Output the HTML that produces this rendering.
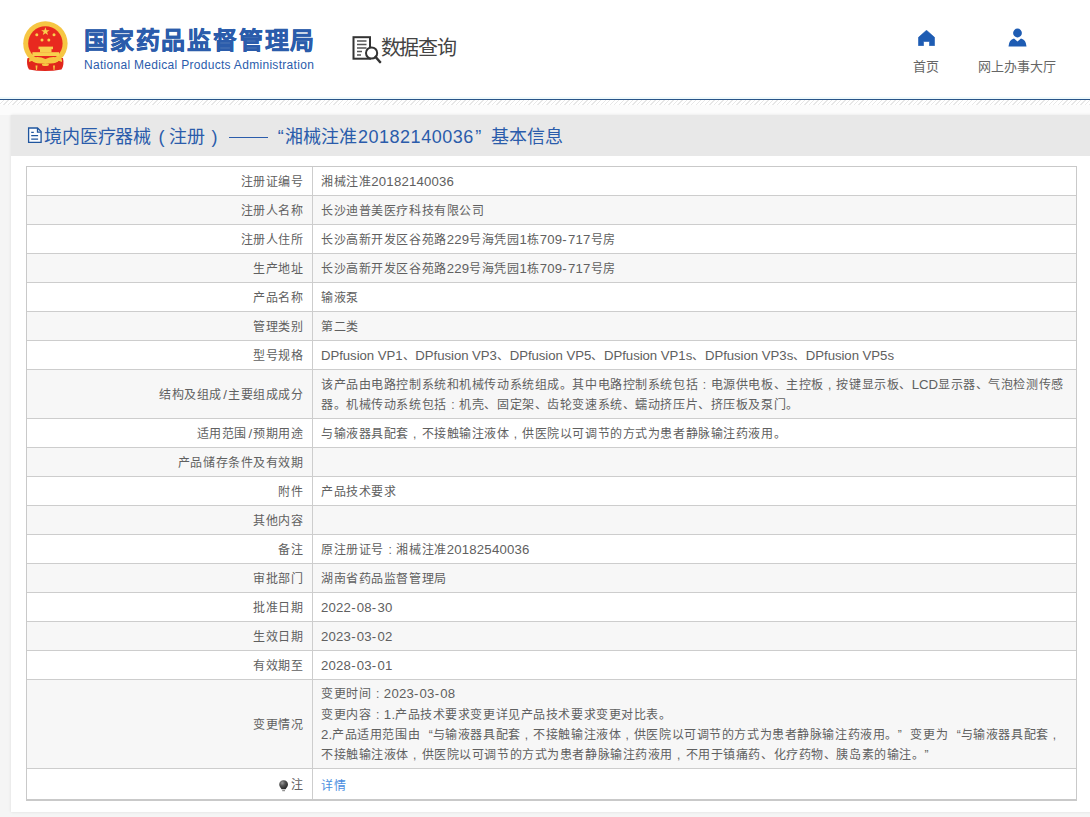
<!DOCTYPE html>
<html lang="zh-CN">
<head>
<meta charset="utf-8">
<style>
*{margin:0;padding:0;box-sizing:border-box;}
html,body{width:1090px;height:817px;overflow:hidden;}
body{font-family:"Liberation Sans",sans-serif;background:#f5f5f5;position:relative;color:#333;}
.hdr{position:absolute;left:0;top:0;width:1090px;height:99px;background:#fff;}
.bline{position:absolute;left:0;top:99px;width:1090px;height:1px;background:#2a5588;}
.cyan{position:absolute;left:0;top:97px;width:1090px;height:2px;background:#eef9fc;}
.hatch{position:absolute;left:0;top:100px;width:1090px;height:5px;
 background:repeating-linear-gradient(135deg,#fff 0px,#fff 2.2px,#e7e7e7 2.2px,#e7e7e7 3.2px);}
.fade{position:absolute;left:0;top:105px;width:1090px;height:10px;background:#fcfcfc;}
.emb{position:absolute;left:18px;top:18px;}
.t1{position:absolute;left:84px;top:21.2px;font-size:24px;letter-spacing:1.8px;font-weight:bold;color:#2b5cab;-webkit-text-stroke:0.45px #2b5cab;white-space:nowrap;}
.t2{position:absolute;left:84px;top:57.9px;font-size:12px;letter-spacing:0.3px;color:#2b5cab;white-space:nowrap;}
.sq{position:absolute;left:352px;top:36px;}
.sqt{position:absolute;left:380.5px;top:32.2px;font-size:20px;letter-spacing:-1.2px;color:#444;white-space:nowrap;}
.nav{position:absolute;top:28px;text-align:center;font-size:13px;color:#666;white-space:nowrap;}
.panel{position:absolute;left:11px;top:115px;width:1100px;height:697px;background:#fff;box-shadow:0 0 3px rgba(0,0,0,0.10);}
.ptitle{position:absolute;left:0;top:0;width:1100px;height:41px;background:#e8e8e8;}
.ptitle .tt{position:absolute;left:33.2px;top:6.7px;font-size:18px;letter-spacing:-0.2px;color:#2b5cab;white-space:nowrap;}
.tt .pl,.tt .pr{display:inline-block;width:17.8px;text-align:center;letter-spacing:0;}
.tt .pl{padding-left:3px;}
.tt .pr{padding-left:2.5px;}
.tt .dash{display:inline-block;width:45.3px;height:10px;position:relative;}
.tt .dash:after{content:"";position:absolute;left:6.5px;width:39px;top:4.8px;height:1px;background:#2b5cab;}
.tt .q1{display:inline-block;width:17.8px;text-align:right;padding-right:1.5px;letter-spacing:0;}
.tt .q2{display:inline-block;width:17.6px;text-align:left;padding-left:1.4px;letter-spacing:0;}
.tt .tdg{letter-spacing:0.53px;margin-left:1.4px;}
.picon{position:absolute;left:16px;top:12px;}
.tbl{position:absolute;left:15px;top:51px;width:1051px;height:635px;border:1px solid #c9c9c9;border-bottom:2px solid #c9c9c9;}
.row{position:absolute;left:0;width:1049px;}
.hl{position:absolute;left:0;width:1049px;height:1px;background:#cdcdcd;}
.vl{position:absolute;left:285px;top:0;width:1px;height:100%;background:#cdcdcd;}
.lc{position:absolute;left:0;top:0;width:285px;height:100%;display:flex;align-items:center;justify-content:flex-end;padding-right:8.5px;font-size:12px;color:#606060;white-space:nowrap;}
.rc{position:absolute;left:286px;top:0;right:0;height:100%;display:flex;align-items:center;padding-left:8px;font-size:12px;line-height:20.2px;color:#606060;white-space:nowrap;}
.lc,.rc{letter-spacing:0.57px;line-height:20.2px;}
.lc>div,.rc>div{position:relative;top:1.4px;}
.la{letter-spacing:-0.05px;font-size:13.2px;}
.dg{letter-spacing:0.2px;}
.hy{letter-spacing:1.2px;}
.sl{margin:0 1.2px 0 1.4px;}
.cl,.cm{display:inline-block;width:12.57px;text-align:center;letter-spacing:0;}
.cm{position:relative;left:-0.5px;}
.ql,.qr{display:inline-block;width:12.57px;letter-spacing:0;}
.ql{text-align:right;}
.qr{text-align:left;}
a{color:#4a8de0;text-decoration:none;position:relative;top:1.5px;}
.pin{display:inline-block;width:10px;height:12px;margin-right:1.5px;vertical-align:-3px;position:relative;left:-0.5px;}
</style>

</head>
<body>
<svg width="0" height="0" style="position:absolute"><defs><radialGradient id="pg" cx="0.35" cy="0.3" r="0.7"><stop offset="0" stop-color="#9a9a9a"/><stop offset="0.45" stop-color="#555"/><stop offset="1" stop-color="#2a2a2a"/></radialGradient></defs></svg>
<div class="hdr">
  <svg class="emb" width="54" height="56" viewBox="0 0 54 56">
    <path d="M9.5 40 Q8 47 11 51.5 Q27 54.5 43.5 51.5 Q46.5 47 45 40 Z" fill="#e1261c"/>
    <circle cx="27.4" cy="25.4" r="22.2" fill="#f6c643"/>
    <circle cx="27.4" cy="25.4" r="17.2" fill="#e8291f"/>
    <path d="M9.5 41 Q18 47 27.4 45 Q37 47 45 41 L45 45 Q37 50 27.4 48 Q18 50 9.5 45 Z" fill="#e1261c"/>
    <rect x="20.5" y="28.6" width="14.5" height="2.6" fill="#f8d04e"/>
    <rect x="22" y="31" width="11.5" height="3.4" fill="#f8d04e"/>
    <rect x="14.4" y="34.2" width="26.7" height="3.8" fill="#f8d04e"/>
    <path d="M11 41.5 Q19 37 27.4 41 Q36 37 44 41.5 L44 44 Q36 40 27.4 44 Q19 40 11 44 Z" fill="#f6c643"/>
    <ellipse cx="27.4" cy="46.5" rx="3.5" ry="1.6" fill="#f6c643"/>
    <path d="M17.5 47.5 L19.5 47.5 L19 52 L18 52 Z M35 47.5 L37 47.5 L36.5 52 L35.5 52 Z" fill="#f6c643"/>
    <polygon points="27.4,9.2 28.5,12.2 31.6,12.2 29.1,14.1 30,17.1 27.4,15.3 24.8,17.1 25.7,14.1 23.2,12.2 26.3,12.2" fill="#f8d04e"/>
    <circle cx="18.8" cy="16.8" r="1.5" fill="#f8d04e"/><circle cx="36" cy="16.8" r="1.5" fill="#f8d04e"/>
    <circle cx="24" cy="21.9" r="1.5" fill="#f8d04e"/><circle cx="30.8" cy="21.9" r="1.5" fill="#f8d04e"/>
  </svg>
  <div class="t1">国家药品监督管理局</div>
  <div class="t2">National Medical Products Administration</div>
  <svg class="sq" width="30" height="28" viewBox="0 0 30 28">
    <rect x="1.5" y="1.2" width="16.5" height="21.5" fill="none" stroke="#333" stroke-width="2"/>
    <path d="M5 5 H14.5 M5 8.5 H14.5 M5 12 H14.5 M5 15.5 H10 M5 19 H9" stroke="#555" stroke-width="1.4"/>
    <circle cx="19.6" cy="17" r="5.6" fill="#fff" stroke="#333" stroke-width="2"/>
    <path d="M23.6 21 L28 26" stroke="#333" stroke-width="2.6" stroke-linecap="round"/>
  </svg>
  <div class="sqt">数据查询</div>
  <div class="nav" style="left:911px;width:30px;">
    <svg width="17" height="16" viewBox="0 0 17 16" style="display:block;margin:2px auto 0;">
      <path d="M8.5 0.3 L16.5 7.3 V15.7 H11.5 V11.5 H5.5 V15.7 H0.5 V7.3 Z" fill="#1e5cb3" stroke="#1e5cb3" stroke-width="0.6" stroke-linejoin="round"/>
    </svg>
    <div style="margin-top:10px;">首页</div>
  </div>
  <div class="nav" style="left:976px;width:82px;">
    <svg width="19" height="19" viewBox="0 0 19 19" style="display:block;margin:0 auto;">
      <circle cx="9.5" cy="5" r="4.4" fill="#1e5cb3"/>
      <path d="M0.5 18.5 Q1 11.5 6 10.5 L9.5 13.5 L13 10.5 Q18 11.5 18.5 18.5 Z" fill="#1e5cb3"/>
    </svg>
    <div style="margin-top:9px;">网上办事大厅</div>
  </div>
</div>
<div class="cyan"></div>
<div class="bline"></div>
<div class="hatch"></div>
<div class="fade"></div>
<div class="panel">
  <div class="ptitle">
    <svg class="picon" width="16" height="17" viewBox="0 0 16 17"><path d="M1.6 1 H10.5 L14.1 4.6 V15.4 H1.6 Z" fill="#fafcff" stroke="#1f559e" stroke-width="1.3" stroke-linejoin="miter"/><path d="M10.5 1 V5.2 H14.1 M4.2 5.4 H6.8 M4.2 8.6 H11.1 M4.2 12.2 H11.1" fill="none" stroke="#1f559e" stroke-width="1.3"/></svg>
    <div class="tt">境内医疗器械<span class="pl">(</span>注册<span class="pr">)</span><span class="dash"></span><span class="q1">&#8220;</span>湘械注准<span class="tdg">20182140036</span><span class="q2">&#8221;</span>基本信息</div>
  </div>
  <div class="tbl">
<div class="row" style="top:0.00px;height:28.00px;background:#fff"><div class="lc"><div>注册证编号</div></div><div class="rc"><div>湘械注准<span class=la><span class=dg>20182140036</span></span></div></div></div>
<div class="row" style="top:28.00px;height:29.00px;background:#f7f7f7"><div class="lc"><div>注册人名称</div></div><div class="rc"><div>长沙迪普美医疗科技有限公司</div></div></div>
<div class="hl" style="top:28.00px"></div>
<div class="row" style="top:57.00px;height:29.00px;background:#fff"><div class="lc"><div>注册人住所</div></div><div class="rc"><div>长沙高新开发区谷苑路<span class=la><span class=dg>229</span></span>号海凭园<span class=la><span class=dg>1</span></span>栋<span class=la><span class=dg>709</span><span class=hy>-</span><span class=dg>717</span></span>号房</div></div></div>
<div class="hl" style="top:57.00px"></div>
<div class="row" style="top:86.00px;height:29.00px;background:#f7f7f7"><div class="lc"><div>生产地址</div></div><div class="rc"><div>长沙高新开发区谷苑路<span class=la><span class=dg>229</span></span>号海凭园<span class=la><span class=dg>1</span></span>栋<span class=la><span class=dg>709</span><span class=hy>-</span><span class=dg>717</span></span>号房</div></div></div>
<div class="hl" style="top:86.00px"></div>
<div class="row" style="top:115.00px;height:29.00px;background:#fff"><div class="lc"><div>产品名称</div></div><div class="rc"><div>输液泵</div></div></div>
<div class="hl" style="top:115.00px"></div>
<div class="row" style="top:144.00px;height:29.00px;background:#f7f7f7"><div class="lc"><div>管理类别</div></div><div class="rc"><div>第二类</div></div></div>
<div class="hl" style="top:144.00px"></div>
<div class="row" style="top:173.00px;height:29.00px;background:#fff"><div class="lc"><div>型号规格</div></div><div class="rc"><div><span class=la>DPfusion VP<span class=dg>1</span></span>、<span class=la>DPfusion VP<span class=dg>3</span></span>、<span class=la>DPfusion VP<span class=dg>5</span></span>、<span class=la>DPfusion VP<span class=dg>1</span>s</span>、<span class=la>DPfusion VP<span class=dg>3</span>s</span>、<span class=la>DPfusion VP<span class=dg>5</span>s</span></div></div></div>
<div class="hl" style="top:173.00px"></div>
<div class="row" style="top:202.00px;height:49.00px;background:#f7f7f7"><div class="lc"><div>结构及组成<span class=la><span class=sl>/</span></span>主要组成成分</div></div><div class="rc"><div>该产品由电路控制系统和机械传动系统组成。其中电路控制系统包括<span class=cl>:</span>电源供电板、主控板<span class=cm>,</span>按键显示板、<span class=la>LCD</span>显示器、气泡检测传感<br>器。机械传动系统包括<span class=cl>:</span>机壳、固定架、齿轮变速系统、蠕动挤压片、挤压板及泵门。</div></div></div>
<div class="hl" style="top:202.00px"></div>
<div class="row" style="top:251.00px;height:29.00px;background:#fff"><div class="lc"><div>适用范围<span class=la><span class=sl>/</span></span>预期用途</div></div><div class="rc"><div>与输液器具配套<span class=cm>,</span>不接触输注液体<span class=cm>,</span>供医院以可调节的方式为患者静脉输注药液用。</div></div></div>
<div class="hl" style="top:251.00px"></div>
<div class="row" style="top:280.00px;height:29.00px;background:#f7f7f7"><div class="lc"><div>产品储存条件及有效期</div></div><div class="rc"><div></div></div></div>
<div class="hl" style="top:280.00px"></div>
<div class="row" style="top:309.00px;height:29.00px;background:#fff"><div class="lc"><div>附件</div></div><div class="rc"><div>产品技术要求</div></div></div>
<div class="hl" style="top:309.00px"></div>
<div class="row" style="top:338.00px;height:29.00px;background:#f7f7f7"><div class="lc"><div>其他内容</div></div><div class="rc"><div></div></div></div>
<div class="hl" style="top:338.00px"></div>
<div class="row" style="top:367.00px;height:29.00px;background:#fff"><div class="lc"><div>备注</div></div><div class="rc"><div>原注册证号<span class=cl>:</span>湘械注准<span class=la><span class=dg>20182540036</span></span></div></div></div>
<div class="hl" style="top:367.00px"></div>
<div class="row" style="top:396.00px;height:29.00px;background:#f7f7f7"><div class="lc"><div>审批部门</div></div><div class="rc"><div>湖南省药品监督管理局</div></div></div>
<div class="hl" style="top:396.00px"></div>
<div class="row" style="top:425.00px;height:29.00px;background:#fff"><div class="lc"><div>批准日期</div></div><div class="rc"><div><span class=la><span class=dg>2022</span><span class=hy>-</span><span class=dg>08</span><span class=hy>-</span><span class=dg>30</span></span></div></div></div>
<div class="hl" style="top:425.00px"></div>
<div class="row" style="top:454.00px;height:29.00px;background:#f7f7f7"><div class="lc"><div>生效日期</div></div><div class="rc"><div><span class=la><span class=dg>2023</span><span class=hy>-</span><span class=dg>03</span><span class=hy>-</span><span class=dg>02</span></span></div></div></div>
<div class="hl" style="top:454.00px"></div>
<div class="row" style="top:483.00px;height:29.00px;background:#fff"><div class="lc"><div>有效期至</div></div><div class="rc"><div><span class=la><span class=dg>2028</span><span class=hy>-</span><span class=dg>03</span><span class=hy>-</span><span class=dg>01</span></span></div></div></div>
<div class="hl" style="top:483.00px"></div>
<div class="row" style="top:512.00px;height:89.00px;background:#f7f7f7"><div class="lc"><div>变更情况</div></div><div class="rc"><div>变更时间<span class=cl>:</span><span class=la><span class=dg>2023</span><span class=hy>-</span><span class=dg>03</span><span class=hy>-</span><span class=dg>08</span></span><br>变更内容<span class=cl>:</span><span class=la><span class=dg>1</span>.</span>产品技术要求变更详见产品技术要求变更对比表。<br><span class=la><span class=dg>2</span>.</span>产品适用范围由<span class=ql>“</span>与输液器具配套<span class=cm>,</span>不接触输注液体<span class=cm>,</span>供医院以可调节的方式为患者静脉输注药液用。<span class=qr>”</span>变更为<span class=ql>“</span>与输液器具配套<span class=cm>,</span><br>不接触输注液体<span class=cm>,</span>供医院以可调节的方式为患者静脉输注药液用<span class=cm>,</span>不用于镇痛药、化疗药物、胰岛素的输注。<span class=qr>”</span></div></div></div>
<div class="hl" style="top:512.00px"></div>
<div class="row" style="top:601.00px;height:31.00px;background:#fff"><div class="lc"><div><svg class=pin viewBox="0 0 10 12"><path d="M4.6 0.3 C7.2 0.3 9 2.2 9 4.6 C9 6.6 7.6 7.6 6.6 9.2 L2.6 9.2 C1.6 7.6 0.2 6.6 0.2 4.6 C0.2 2.2 2 0.3 4.6 0.3 Z" fill="url(#pg)"/><rect x="3.2" y="10.2" width="2.8" height="1" fill="#777"/></svg>注</div></div><div class="rc"><div><a>详情</a></div></div></div>
<div class="hl" style="top:601.00px"></div>
    <div class="vl"></div>
  </div>
</div>
</body>
</html>
